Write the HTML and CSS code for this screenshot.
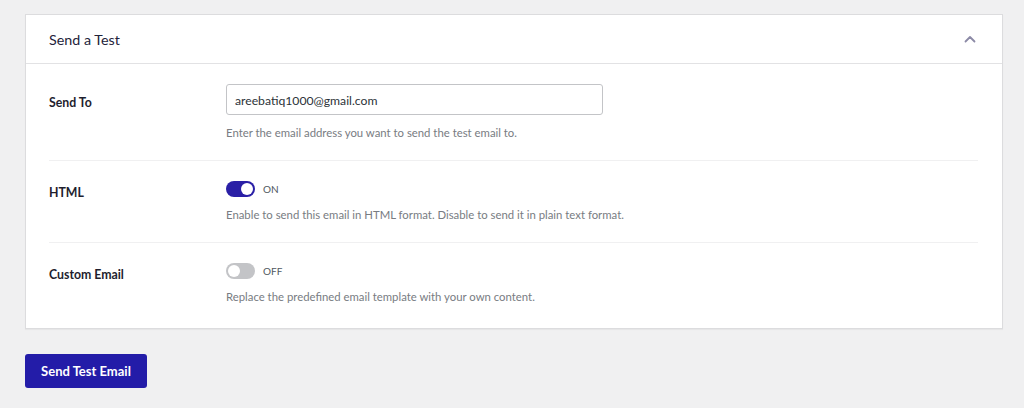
FILE: index.html
```html
<!DOCTYPE html>
<html lang="en">
<head>
<meta charset="utf-8">
<title>Send a Test</title>
<link rel="stylesheet" href="styles.css">
</head>
<body>
<div class="page">
  <section class="card">
    <header class="card-header">
      <h2 class="card-title">Send a Test</h2>
      <svg class="chevron" width="12" height="8" viewBox="0 0 12 8" aria-hidden="true">
        <path d="M1.5 6.5 L6 2 L10.5 6.5" fill="none" stroke="#8c8aa6" stroke-width="1.8" stroke-linecap="round" stroke-linejoin="round"/>
      </svg>
    </header>
    <div class="card-body">
      <div class="row">
        <div class="label">Send To</div>
        <div class="field">
          <input class="text-input" type="text" value="areebatiq1000@gmail.com">
          <p class="help">Enter the email address you want to send the test email to.</p>
        </div>
      </div>
      <div class="row">
        <div class="label">HTML</div>
        <div class="field">
          <div class="toggle-line">
            <span class="toggle on"><span class="knob"></span></span>
            <span class="toggle-text">ON</span>
          </div>
          <p class="help">Enable to send this email in HTML format. Disable to send it in plain text format.</p>
        </div>
      </div>
      <div class="row">
        <div class="label">Custom Email</div>
        <div class="field">
          <div class="toggle-line">
            <span class="toggle off"><span class="knob"></span></span>
            <span class="toggle-text">OFF</span>
          </div>
          <p class="help">Replace the predefined email template with your own content.</p>
        </div>
      </div>
    </div>
  </section>
  <button class="btn-primary" type="button">Send Test Email</button>
</div>
</body>
</html>
```

FILE: styles.css
```css
html, body {
  margin: 0;
  padding: 0;
  background: #f0f0f1;
}
body {
  font-family: Lato, "Noto Sans", sans-serif;
  color: #1e1e2e;
}
.page {
  padding: 14px 21px 20px 25px;
}
.card {
  background: #fff;
  border: 1px solid #dcdcde;
  box-shadow: 0 1px 1px rgba(0,0,0,0.04);
}
.card-header {
  display: flex;
  align-items: center;
  justify-content: space-between;
  height: 48px;
  padding: 0 26px 0 23px;
  border-bottom: 1px solid #e2e2e4;
}
.card-title {
  margin: 0;
  font-size: 14.3px;
  font-weight: 400;
  color: #23233a;
}
.chevron {
  display: block;
}
.card-body {
  padding: 0 24px 0 23px;
}
.row {
  display: flex;
  padding: 20px 0 19px;
  border-bottom: 1px solid #f0f0f1;
}
.row:last-child {
  border-bottom: none;
  padding-bottom: 23px;
}
.label {
  width: 177px;
  flex: none;
  font-size: 12.3px;
  font-weight: 700;
  color: #1e1e2e;
  line-height: 16px;
  padding-top: 4px;
}
.row:first-child .label {
  padding-top: 11px;
}
.field {
  flex: 1;
}
.text-input {
  display: block;
  box-sizing: border-box;
  width: 377px;
  height: 31px;
  margin: 0;
  padding: 1px 8px 0;
  border: 1px solid #c3c4c7;
  border-radius: 3px;
  font-family: inherit;
  font-size: 12.2px;
  color: #2c3338;
  background: #fff;
}
.help {
  margin: 10px 0 0;
  font-size: 11.35px;
  line-height: 16px;
  color: #787c82;
}
.toggle-line {
  display: flex;
  align-items: center;
  height: 16px;
}
.toggle {
  position: relative;
  display: inline-block;
  width: 29px;
  height: 16px;
  border-radius: 8px;
  box-sizing: border-box;
}
.toggle.on {
  background: #2a1fa6;
}
.toggle.off {
  background: #c3c4c7;
}
.knob {
  position: absolute;
  top: 2px;
  width: 12px;
  height: 12px;
  border-radius: 50%;
  background: #fff;
}
.toggle.on .knob {
  right: 2px;
}
.toggle.off .knob {
  left: 2px;
}
.toggle-text {
  margin-left: 8px;
  font-size: 10px;
  color: #50575e;
}
.btn-primary {
  display: block;
  margin-top: 25px;
  width: 122px;
  height: 34px;
  padding: 0;
  border: none;
  border-radius: 3px;
  background: #231ca8;
  color: #fff;
  font-family: inherit;
  font-size: 13px;
  font-weight: 700;
  cursor: pointer;
}
```
